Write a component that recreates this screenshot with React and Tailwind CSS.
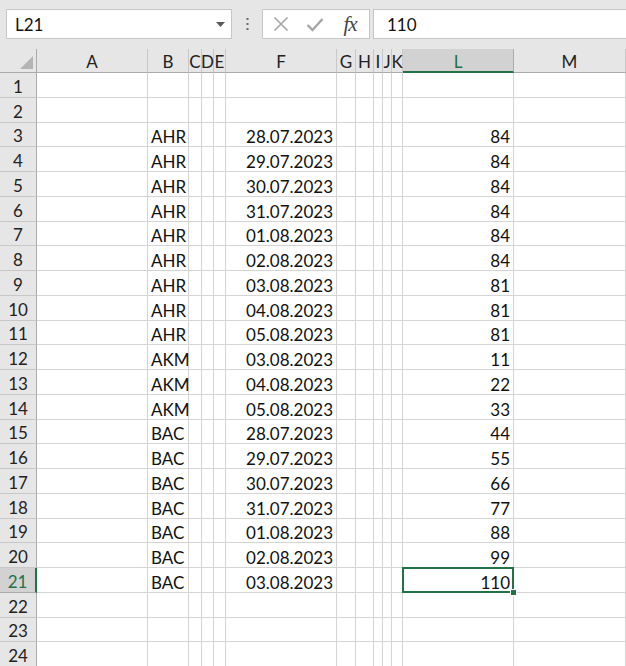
import React from "react";

const COLS = [
  { l: "A", w: "w-[111px]" },
  { l: "B", w: "w-[41px]" },
  { l: "C", w: "w-[13px]" },
  { l: "D", w: "w-[12px]" },
  { l: "E", w: "w-[12px]" },
  { l: "F", w: "w-[111px]" },
  { l: "G", w: "w-[19px]" },
  { l: "H", w: "w-[18px]" },
  { l: "I", w: "w-[9px]" },
  { l: "J", w: "w-[9px]" },
  { l: "K", w: "w-[11px]" },
  { l: "L", w: "w-[111px]" },
  { l: "M", w: "w-[112px]" },
];

const DATA = {
  3: ["AHR", "28.07.2023", "84"],
  4: ["AHR", "29.07.2023", "84"],
  5: ["AHR", "30.07.2023", "84"],
  6: ["AHR", "31.07.2023", "84"],
  7: ["AHR", "01.08.2023", "84"],
  8: ["AHR", "02.08.2023", "84"],
  9: ["AHR", "03.08.2023", "81"],
  10: ["AHR", "04.08.2023", "81"],
  11: ["AHR", "05.08.2023", "81"],
  12: ["AKM", "03.08.2023", "11"],
  13: ["AKM", "04.08.2023", "22"],
  14: ["AKM", "05.08.2023", "33"],
  15: ["BAC", "28.07.2023", "44"],
  16: ["BAC", "29.07.2023", "55"],
  17: ["BAC", "30.07.2023", "66"],
  18: ["BAC", "31.07.2023", "77"],
  19: ["BAC", "01.08.2023", "88"],
  20: ["BAC", "02.08.2023", "99"],
  21: ["BAC", "03.08.2023", "110"],
};

function Cell({ col, row }) {
  const d = DATA[row];
  let content = null;
  let align = "";
  if (d) {
    if (col.l === "B") {
      content = d[0];
      align = "justify-start pl-[3px]";
    } else if (col.l === "F") {
      content = d[1];
      align = "justify-end pr-[3px]";
    } else if (col.l === "L") {
      content = d[2];
      align = "justify-end pr-[3px]";
    }
  }
  const selected = row === 21 && col.l === "L";
  return (
    <div
      className={`${col.w} shrink-0 h-full border-r border-b border-[#d4d4d4] flex items-end relative whitespace-nowrap overflow-visible ${align}`}
    >
      {content && <span className="leading-[18px] relative z-10">{content}</span>}
      {selected && (
        <>
          <div className="absolute -left-[1px] -top-[1px] w-[112px] h-[26px] border-2 border-[#217346] z-20 pointer-events-none" />
          <div className="absolute -right-[3px] -bottom-[3px] w-[5px] h-[5px] bg-[#217346] z-30 outline outline-1 outline-white" />
        </>
      )}
    </div>
  );
}

export default function App() {
  const rows = Array.from({ length: 24 }, (_, i) => i + 1);
  return (
    <div className="w-[626px] h-[666px] overflow-hidden bg-white font-['Lato',sans-serif] text-[17px] text-[#111]">
      {/* Formula bar */}
      <div className="h-[49px] bg-[#e6e6e6] flex items-start pt-[9px]">
        <div className="ml-[6px] w-[226px] h-[30px] bg-white border border-[#c6c6c6] flex items-center justify-between pl-[8px] pr-[6px]">
          <span className="text-[17px] leading-none">L21</span>
          <svg width="9" height="5" viewBox="0 0 9 5">
            <path d="M0 0 H9 L4.5 5 Z" fill="#5a5a5a" />
          </svg>
        </div>
        <div className="w-[30px] h-[30px] flex items-center justify-center">
          <svg width="3" height="12" viewBox="0 0 3 12">
            <rect x="0.5" y="0" width="2" height="2" fill="#6b6b6b" />
            <rect x="0.5" y="5" width="2" height="2" fill="#6b6b6b" />
            <rect x="0.5" y="10" width="2" height="2" fill="#6b6b6b" />
          </svg>
        </div>
        <div className="w-[108px] h-[30px] bg-white border border-[#c6c6c6] flex items-center">
          <div className="w-[36px] flex justify-center">
            <svg width="16" height="16" viewBox="0 0 16 16">
              <path d="M1.5 1.5 L14.5 14.5 M14.5 1.5 L1.5 14.5" stroke="#a6a6a6" strokeWidth="1.6" fill="none" />
            </svg>
          </div>
          <div className="w-[32px] flex justify-center">
            <svg width="18" height="15" viewBox="0 0 18 15">
              <path d="M1.5 8 L6.5 13 L16.5 2" stroke="#a6a6a6" strokeWidth="2.4" fill="none" />
            </svg>
          </div>
          <div className="w-[38px] flex justify-center">
            <span className="font-['Liberation_Serif',serif] italic text-[21px] leading-none text-[#444] tracking-[-1px]">fx</span>
          </div>
        </div>
        <div className="ml-[3px] flex-1 h-[30px] bg-white border border-[#c6c6c6] border-r-0 flex items-center pl-[13px]">
          <span className="text-[17px] leading-none">110</span>
        </div>
      </div>

      {/* Column headers */}
      <div className="flex h-[24px] bg-[#e6e6e6]">
        <div className="w-[37px] shrink-0 h-full border-r border-b border-[#ababab] relative">
          <svg className="absolute right-[3px] bottom-[3px]" width="13" height="13" viewBox="0 0 13 13">
            <path d="M13 0 L13 13 L0 13 Z" fill="#b4b4b4" />
          </svg>
        </div>
        {COLS.map((c) => (
          <div
            key={c.l}
            className={`${c.w} shrink-0 h-full flex items-center justify-center leading-none pt-[2px] ${
              c.l === "L"
                ? "bg-[#d2d2d2] text-[#217346] border-b-2 border-b-[#217346] border-r border-r-[#ababab]"
                : "text-[#222] border-r border-r-[#c8c8c8] border-b border-b-[#ababab]"
            }`}
          >
            {c.l}
          </div>
        ))}
      </div>

      {/* Rows */}
      {rows.map((r) => (
        <div key={r} className="flex h-[24.75px]">
          <div
            className={`w-[37px] shrink-0 h-full flex items-center justify-center leading-none pt-[3px] ${
              r === 21
                ? "bg-[#d2d2d2] text-[#217346] border-r-2 border-r-[#217346] border-b border-b-[#ababab]"
                : "bg-[#e6e6e6] text-[#222] border-r border-r-[#ababab] border-b border-b-[#c8c8c8]"
            }`}
          >
            {r}
          </div>
          {COLS.map((c) => (
            <Cell key={c.l} col={c} row={r} />
          ))}
        </div>
      ))}
    </div>
  );
}
